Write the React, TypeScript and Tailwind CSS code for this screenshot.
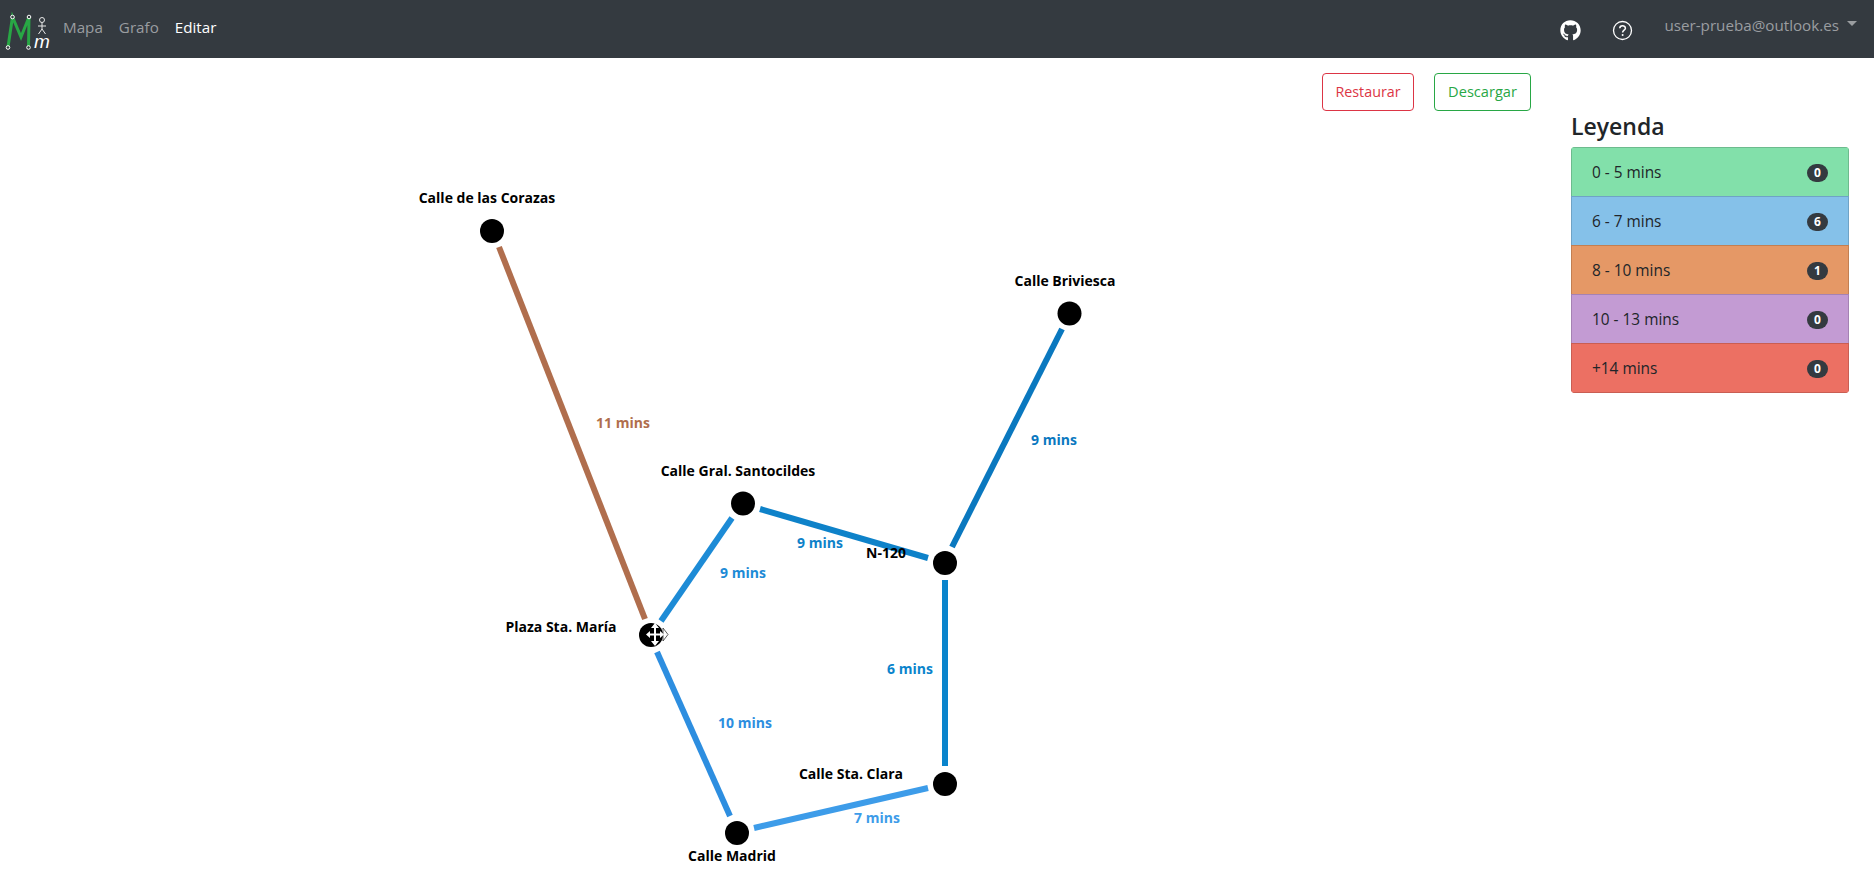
import { FaGithub } from "react-icons/fa"

const font = { fontFamily: '"Open Sans", "Noto Sans", sans-serif' }

const nodes = [
    { name: "Calle de las Corazas", x: 492, y: 231, lx: 487, ly: 198 },
    { name: "Calle Briviesca", x: 1069.5, y: 313.5, lx: 1065, ly: 281 },
    { name: "Calle Gral. Santocildes", x: 743, y: 503.5, lx: 738, ly: 471 },
    { name: "N-120", x: 945, y: 563, lx: 886, ly: 553 },
    { name: "Plaza Sta. María", x: 651, y: 635, lx: 561, ly: 627 },
    { name: "Calle Sta. Clara", x: 945, y: 784, lx: 851, ly: 774 },
    { name: "Calle Madrid", x: 737, y: 833, lx: 732, ly: 856 },
]

const edges = [
    { x1: 499, y1: 247, x2: 645, y2: 619, color: "#b06e4d", label: "11 mins", lx: 623, ly: 428 },
    { x1: 1062, y1: 329, x2: 952, y2: 547, color: "#0a78bf", label: "9 mins", lx: 1054, ly: 445 },
    { x1: 760, y1: 509, x2: 928, y2: 558, color: "#0e82c9", label: "9 mins", lx: 820, ly: 548 },
    { x1: 732, y1: 518, x2: 661, y2: 621, color: "#1d8bd6", label: "9 mins", lx: 743, ly: 578 },
    { x1: 945, y1: 580, x2: 945, y2: 766, color: "#0a84cc", label: "6 mins", lx: 910, ly: 674 },
    { x1: 657, y1: 652, x2: 730, y2: 816, color: "#2d8ee0", label: "10 mins", lx: 745, ly: 728 },
    { x1: 754, y1: 828, x2: 928, y2: 788, color: "#3d9ce9", label: "7 mins", lx: 877, ly: 823 },
]

const legend = [
    { label: "0 - 5 mins", count: 0, bg: "bg-[#82e0aa]", border: "border-[#6dbb8e]" },
    { label: "6 - 7 mins", count: 6, bg: "bg-[#85c1e9]", border: "border-[#6fa3c6]" },
    { label: "8 - 10 mins", count: 1, bg: "bg-[#e59866]", border: "border-[#c27f52]" },
    { label: "10 - 13 mins", count: 0, bg: "bg-[#c39bd3]", border: "border-[#a582b3]" },
    { label: "+14 mins", count: 0, bg: "bg-[#ec7063]", border: "border-[#c95e53]" },
]

function Logo() {
    return (
        <svg width="50" height="48" viewBox="0 0 50 48" className="shrink-0">
            <path d="M8 42 L12.500 12 L21 32 L29 12 L28.500 42" fill="none" stroke="#28a745" strokeWidth="3" />
            {[[8, 42.500], [12.500, 12], [29, 12], [28.500, 42.500]].map(([cx, cy], i) => (
                <circle key={i} cx={cx} cy={cy} r="1.800" fill="#343a40" stroke="#fff" strokeWidth="1" />
            ))}
            <circle cx="42" cy="15" r="2.500" fill="none" stroke="#e8e8e8" strokeWidth="1" />
            <path d="M42 17.500 V24 M38 21 H46 M42 24 L38.500 29 M42 24 L45.500 29" fill="none" stroke="#e8e8e8" strokeWidth="1" />
            <text x="34" y="43" fill="#fff" fontSize="19" fontStyle="italic" fontFamily='"Liberation Sans", sans-serif'>m</text>
        </svg>
    )
}

function MoveCursor() {
    return (
        <svg width="26" height="28" viewBox="0 0 26 28" className="absolute left-[644px] top-[621px]">
            <path d="M19 7 L24 13.500 L19 20 Z" fill="#fff" stroke="#333" strokeWidth="0.800" />
            <path d="M11 2 L15 7 H12 V12.500 H16 V10 L20 13.500 L16 17 V14.500 H12 V20 H15 L11 25 L7 20 H10 V14.500 H6 V17 L2 13.500 L6 10 V12.500 H10 V7 H7 Z" fill="#fff" />
        </svg>
    )
}

export default function App() {
    return (
        <div className="min-h-[877px] bg-white text-[#212529]" style={font}>
            <nav className="h-[58px] bg-[#343a40] flex items-center pr-[17px]">
                <Logo />
                <div className="flex items-center gap-[16px] ml-[13px] text-[15.2px] -mt-[4px]">
                    <a className="text-[#9a9da0]">Mapa</a>
                    <a className="text-[#9a9da0]">Grafo</a>
                    <a className="text-white">Editar</a>
                </div>
                <div className="ml-auto flex items-center">
                    <FaGithub className="text-white text-[21px] mt-[2px]" />
                    <svg width="21" height="21" viewBox="0 0 21 21" className="ml-[31px] mt-[2px]">
                        <circle cx="10.500" cy="10.500" r="9" fill="none" stroke="#fff" strokeWidth="1.300" />
                        <path d="M7.800 8.200 C7.800 4.800 13.400 4.800 13.400 8.200 C13.400 10.200 10.600 10.200 10.600 12.500" fill="none" stroke="#fff" strokeWidth="1.500" />
                        <circle cx="10.600" cy="15" r="1" fill="#fff" />
                    </svg>
                    <span className="ml-[31px] text-[15.2px] text-[#9a9da0] -mt-[8px]">user-prueba@outlook.es</span>
                    <span className="ml-[8px] -mt-[12px] w-0 h-0 border-x-[5px] border-x-transparent border-t-[5px] border-t-[#9a9da0]" />
                </div>
            </nav>
            <div className="flex">
                <main className="relative flex-1 h-[819px]">
                    <div className="flex justify-end gap-[20px] pt-[15px] pr-[40px]">
                        <button className="h-[38px] w-[92px] rounded border border-[#dc3545] text-[#dc3545] text-[14.3px]">Restaurar</button>
                        <button className="h-[38px] w-[97px] rounded border border-[#28a745] text-[#28a745] text-[14.6px]">Descargar</button>
                    </div>
                    <div className="absolute left-0 top-[-58px] w-[1571px] h-[877px] pointer-events-none">
                        <svg width="1571" height="877" className="absolute inset-0">
                            {edges.map((e, i) => (
                                <g key={i}>
                                    <line x1={e.x1} y1={e.y1} x2={e.x2} y2={e.y2} stroke={e.color} strokeWidth="6" />
                                    <text x={e.lx} y={e.ly} fill={e.color} fontSize="14" fontWeight="700" textAnchor="middle">{e.label}</text>
                                </g>
                            ))}
                            {nodes.map((n) => (
                                <g key={n.name}>
                                    <circle cx={n.x} cy={n.y} r="12" fill="#000" />
                                    <text x={n.lx} y={n.ly + 5} fill="#000" fontSize="14" fontWeight="700" textAnchor="middle">{n.name}</text>
                                </g>
                            ))}
                        </svg>
                        <MoveCursor />
                    </div>
                </main>
                <aside className="w-[278px] mr-[25px] pt-[54px] shrink-0">
                    <h4 className="text-[23px] font-semibold leading-[29px] mb-[6px]">Leyenda</h4>
                    <ul className="rounded overflow-hidden">
                        {legend.map((item) => (
                            <li key={item.label} className={`h-[50px] -mt-px first:mt-0 flex items-center justify-between pt-[2px] pl-[20px] pr-[20px] border text-[15.4px] ${item.bg} ${item.border}`}>
                                <span>{item.label}</span>
                                <span className="w-[21px] h-[18px] rounded-full bg-[#343a40] text-white text-[12px] font-bold flex items-center justify-center">{item.count}</span>
                            </li>
                        ))}
                    </ul>
                </aside>
            </div>
        </div>
    )
}
